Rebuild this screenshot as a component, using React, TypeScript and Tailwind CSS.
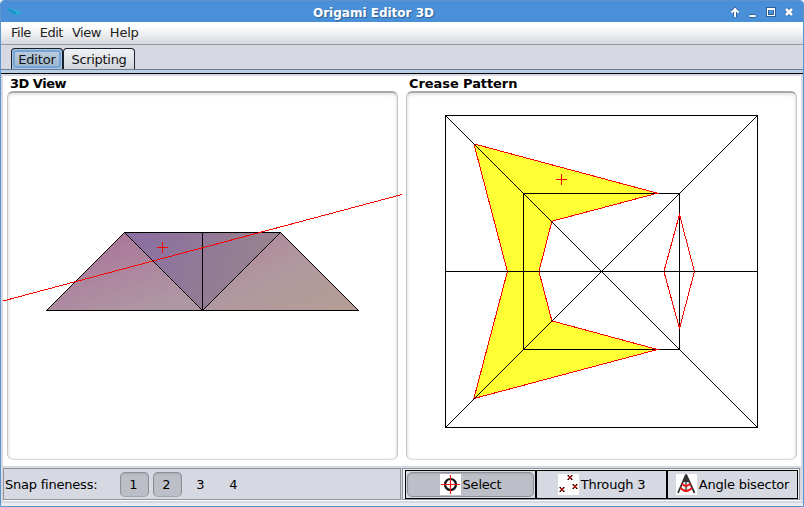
import type { ReactNode } from 'react';

const INK = '#000';
const RED = '#f00';

function Panel() {
  return (
    <div className="ml-1 h-[369px] w-[391px] rounded-[6px] border border-t-2 border-[#c4c4c4] border-t-[#a9a9a9] border-b-[#dcdcdc] bg-white shadow-[inset_0_1px_3px_1px_#e4e4e4]" />
  );
}

function View3D() {
  return (
    <div className="relative h-[390px] w-[399px] pt-[15px]">
      <span className="absolute top-0 left-[7px] text-[13px] leading-[15px] font-bold tracking-[-0.5px]">3D View</span>
      <Panel />
      <svg className="absolute inset-0" width="400" height="390" viewBox="3 76 400 390" shapeRendering="crispEdges">
        <defs>
          <linearGradient id="left" gradientUnits="userSpaceOnUse" x1="110" y1="232" x2="135" y2="310">
            <stop offset="0" stopColor="#aa7599" />
            <stop offset="1" stopColor="#af96a3" />
          </linearGradient>
          <linearGradient id="mid" gradientUnits="userSpaceOnUse" x1="124" y1="225" x2="255" y2="275">
            <stop offset="0" stopColor="#8a6da3" />
            <stop offset="1" stopColor="#97818f" />
          </linearGradient>
          <linearGradient id="right" gradientUnits="userSpaceOnUse" x1="265" y1="235" x2="310" y2="325">
            <stop offset="0" stopColor="#b08a9b" />
            <stop offset="0.4" stopColor="#b0989f" />
            <stop offset="1" stopColor="#b49d96" />
          </linearGradient>
        </defs>
        <path d="M124.5 232.5L46.5 310.5H202.5Z" fill="url(#left)" />
        <path d="M124.5 232.5H280.5L202.5 310.5Z" fill="url(#mid)" />
        <path d="M280.5 232.5L358.5 310.5H202.5Z" fill="url(#right)" />
        <path d="M124.5 232.5H280.5L358.5 310.5H46.5ZL202.5 310.5L280.5 232.5M124.5 232.5L202.5 310.5V232.5" fill="none" stroke={INK} />
        <path d="M3 301L402 194.5M157 247.5H168M162.5 242V253" stroke={RED} />
      </svg>
    </div>
  );
}

function CreasePattern() {
  return (
    <div className="relative h-[390px] w-[399px] pt-[15px]">
      <span className="absolute top-0 left-[7px] text-[13px] leading-[15px] font-bold tracking-[-0.08px]">Crease Pattern</span>
      <Panel />
      <svg className="absolute inset-0" width="399" height="390" viewBox="402 76 399 390" shapeRendering="crispEdges">
        <path d="M473.9 143.9L657.5 193.2L551.9 221.2L538.9 271.5L551.9 320.9L657.5 349.5L473.9 398.5L507.4 271.5Z" fill="#ff3" stroke={RED} />
        <path d="M679.5 214.5L694.4 271.5L679.5 328.5L663.9 271.5Z" fill="none" stroke={RED} />
        <path d="M445.5 115.5H757.5V427.5H445.5ZM523.5 193.5H679.5V349.5H523.5ZM445.5 271.5H757.5M445.5 115.5L757.5 427.5M757.5 115.5L445.5 427.5" fill="none" stroke={INK} />
        <path d="M556 179.5H567M561.5 174V185M655 193.5H659M655 349.5H659M679.5 213V218M679.5 325V329" stroke={RED} />
      </svg>
    </div>
  );
}

function SelectIcon() {
  return (
    <svg width="21" height="21" viewBox="0 0 21 21" className="bg-white">
      <circle cx="10.5" cy="10.5" r="5.5" fill="none" stroke="#111" strokeWidth="2.2" />
      <path d="M1 10.5H20M10.5 1V20" stroke="#f11" strokeWidth="1.2" />
    </svg>
  );
}

function ThroughIcon() {
  return (
    <svg width="21" height="21" viewBox="0 0 21 21" className="bg-white">
      <path d="M10 1.5L14 5.5M14 1.5L10 5.5M15 10.5L19 14.5M19 10.5L15 14.5M2 13.5L6 17.5M6 13.5L2 17.5" stroke="#900" strokeWidth="1.3" />
      <path d="M9.5 1.5H11M13 1.5H14.5M9.5 5.5H11M13 5.5H14.5M14.5 10.5H16M18 10.5H19.5M14.5 14.5H16M18 14.5H19.5M1.5 13.5H3M5 13.5H6.5M1.5 17.5H3M5 17.5H6.5" stroke="#200" />
    </svg>
  );
}

function BisectorIcon() {
  return (
    <svg width="21" height="21" viewBox="0 0 21 21" className="bg-white">
      <path d="M10 2V18" stroke="#777" strokeWidth="2.4" />
      <path d="M10 0.5L2 19M10 0.5L18.5 19" stroke="#333" strokeWidth="1.8" />
      <path d="M10 1L7 8H13Z" fill="#333" />
      <path d="M6 9.5Q7.5 12 10 12Q12.5 12 14.5 9.5M4.5 13.5Q7 17 10 17Q13.500 17 16 13.5" fill="none" stroke="#e11" strokeWidth="1.8" />
    </svg>
  );
}

function Snap({ n, on }: { n: number; on?: boolean }) {
  return (
    <div className={'flex h-[25px] w-[29px] items-center justify-center rounded-[5px] pt-px ' + (on ? 'border border-[#8d9096] border-b-[#a4a7ad] bg-[#bcbfc7] pr-[2px] shadow-[inset_0_1px_2px_#a8abb3]' : '')}>{n}</div>
  );
}

function Tool({ icon, label, active }: { icon: ReactNode; label: string; active?: boolean }) {
  return (
    <div className="flex h-[29px] w-[131px] border border-black p-px">
      <div className={'flex grow items-center justify-center gap-[2px] ' + (active ? 'rounded-[5px] border border-[#8d9096] bg-[#bcbfc7] shadow-[inset_0_1px_2px_#a8abb3]' : '')}>
        {icon}
        <span className="tracking-[-0.2px] whitespace-nowrap">{label}</span>
      </div>
    </div>
  );
}

export default function App() {
  return (
    <div className="h-[507px] w-[804px] overflow-hidden bg-white font-['DejaVu_Sans',sans-serif] text-[13px] leading-4 text-[#111]">
      <div className="flex h-full flex-col overflow-hidden rounded-t-[4px] border border-[#5e93cd] bg-[#d6d9e1]">
        <header className="flex h-[21px] shrink-0 items-center bg-[#4a90d9]">
          <svg width="16" height="10" viewBox="0 0 16 10" className="ml-[6px]">
            <path d="M0 1L9 3L15 6L10 8L4 6Z" fill="#2aaed5" />
            <path d="M0 1L9 5L10 8L4 6Z" fill="#1695c5" />
          </svg>
          <span className="mt-[2px] ml-[290px] w-[122px] text-[12px] font-bold whitespace-nowrap text-white [text-shadow:1px_1px_1px_#2d5f98]">Origami Editor 3D</span>
          <svg width="66" height="14" viewBox="0 0 66 14" className="ml-[294px]" fill="none">
            <g stroke="#2e619b" strokeWidth="4">
              <path d="M6 12V4M3 7L6 4L9 7M20.5 11H26.5M39 4H45V10H39ZM57 4L63 10M63 4L57 10" />
            </g>
            <path d="M40 5H44V9H40Z" fill="#4a90d9" />
            <g stroke="#fff" strokeWidth="2">
              <path d="M6 12V4M2.5 7.5L6 4L9.5 7.5M20.5 11H26.5" />
            </g>
            <path d="M57 4L63 10M63 4L57 10" stroke="#fff" strokeWidth="2.6" />
            <path d="M38.5 3.5H45.5V10.5H38.5ZM38 4.5H46" stroke="#fff" shapeRendering="crispEdges" />
          </svg>
        </header>
        <nav className="flex h-[23px] shrink-0 gap-[9px] border-b border-[#9297a1] bg-linear-to-b from-white from-20% to-[#d6d9df] pt-[3px] pl-[10px] tracking-[-0.5px] text-[#222]">
          <span>File</span><span>Edit</span><span>View</span><span className="tracking-[-0.2px]">Help</span>
        </nav>
        <div className="flex h-[25px] shrink-0 items-end border-b border-[#6d7a8f] pl-[10px]">
          <div className="flex h-[21px] w-[52px] items-center justify-center rounded-t-[4px] border border-b-0 border-[#17212d] bg-[#a9c3dc] p-px">
            <div className="flex h-[18px] w-[48px] items-center justify-center rounded-[3px] border-2 border-[#74a4d5] bg-linear-to-b from-[#bccbdc] to-[#9db7cf] pt-[2px] tracking-[-0.15px]">Editor</div>
          </div>
          <div className="flex h-[21px] w-[72px] items-center justify-center rounded-t-[4px] border border-b-0 border-[#17212d] bg-linear-to-b from-[#f1f2f5] to-[#d2d5dc] pt-[2px] tracking-[-0.3px]">Scripting</div>
        </div>
        <div className="h-1 shrink-0 border-b border-black bg-[#b8cfe5]" />
        <main className="mx-[2px] mt-[2px] flex h-[390px] shrink-0 bg-white text-black">
          <View3D />
          <CreasePattern />
        </main>
        <footer className="mx-[2px] mt-[2px] flex h-[33px] shrink-0 gap-px border-b border-white text-black">
          <div className="flex h-[32px] w-[398px] items-center border border-[#8f939b] pl-px">
            <span className="w-[115px] pt-[2px] tracking-[-0.22px]">Snap fineness:</span>
            <div className="flex gap-1"><Snap n={1} on /><Snap n={2} on /><Snap n={3} /><Snap n={4} /></div>
          </div>
          <div className="flex h-[32px] w-[398px] border border-[#8f939b] bg-[#eef0f4] pt-px pl-[2px]">
            <div className="flex h-[29px] bg-[#d6d9e1]">
              <Tool icon={<SelectIcon />} label="Select" active />
              <Tool icon={<ThroughIcon />} label="Through 3" />
              <Tool icon={<BisectorIcon />} label="Angle bisector" />
            </div>
          </div>
        </footer>
        <div className="mt-[2px] h-[3px] shrink-0 bg-[#ebecef]" />
      </div>
    </div>
  );
}
